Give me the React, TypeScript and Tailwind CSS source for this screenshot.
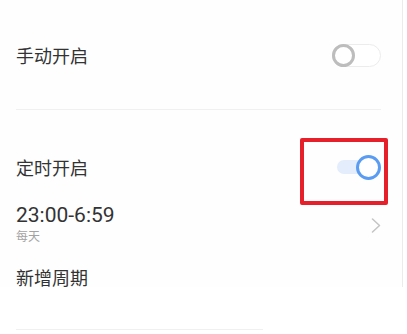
const font = { fontFamily: '"Noto Sans CJK SC", "Noto Sans", sans-serif' };

function Toggle({ on }: { on: boolean }) {
  if (on) {
    return (
      <div className="relative flex h-[25px] w-[47px] items-center">
        <div className="ml-[3px] h-[14px] w-[38px] rounded-full bg-[#e3edfb]" />
        <div className="absolute right-0 top-0 h-[25px] w-[25px] rounded-full border-[3px] border-[#5b9cf3] bg-white" />
      </div>
    );
  }
  return (
    <div className="relative h-[23px] w-[49px] rounded-full border border-[#ececec] bg-white">
      <div className="absolute -left-px -top-px h-[23px] w-[23px] rounded-full border-[3px] border-[#bdbdbd] bg-white" />
    </div>
  );
}

export default function App() {
  return (
    <div className="relative h-[334px] w-[407px] overflow-hidden bg-white text-[#333]" style={font}>
      {/* Panel */}
      <div className="h-[287px] w-[403px] border-r border-[#ebebeb] bg-[#fefeff] pl-4 pr-[21px] pt-[43px]">
        {/* Manual */}
        <div className="flex h-[24px] items-center justify-between">
          <span className="text-[18px] leading-[24px]">手动开启</span>
          <Toggle on={false} />
        </div>
        <div className="mt-[42px] h-px bg-[#f0f0f0]" />

        {/* Scheduled */}
        <div className="mt-[45px] flex h-[24px] items-center justify-between">
          <span className="text-[18px] leading-[24px]">定时开启</span>
          <Toggle on />
        </div>
        <div className="mt-[24px] flex items-center justify-between">
          <div className="flex flex-col">
            <span className="text-[21px] leading-[24px]" style={{ fontFamily: "Roboto, sans-serif" }}>23:00-6:59</span>
            <span className="mt-[2px] text-[12px] leading-[14px] text-[#a3a3a3]">每天</span>
          </div>
          <svg width="10" height="15" viewBox="0 0 10 15" className="mt-[4px]" fill="none">
            <polyline points="1.5,1 8.5,7.5 1.5,14" stroke="#c4c4c4" strokeWidth="1.5" strokeLinecap="round" strokeLinejoin="round" />
          </svg>
        </div>
        <div className="mt-[25px] text-[18px] leading-[18px]">新增周期</div>
      </div>

      {/* Bottom divider */}
      <div className="ml-4 mt-[42px] h-px w-[247px] bg-[#f0f0f0]" />

      {/* Highlight box */}
      <div className="absolute left-[300px] top-[138px] h-[67px] w-[88px] rounded-[2px] border-4 border-[#e5202a]" />
    </div>
  );
}
